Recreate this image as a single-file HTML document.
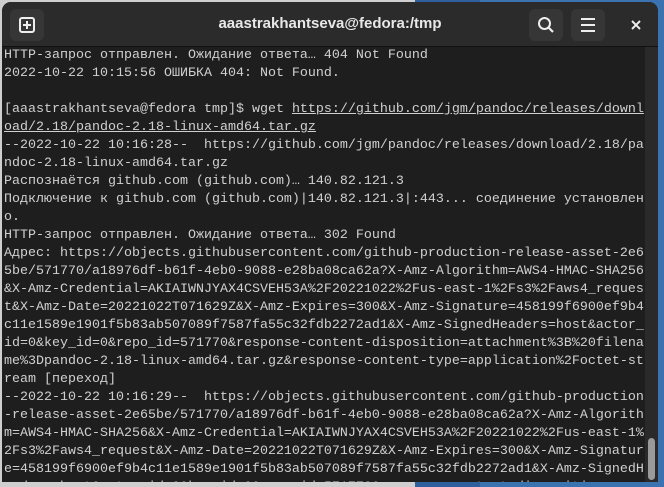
<!DOCTYPE html>
<html><head><meta charset="utf-8"><style>
html,body{margin:0;padding:0;width:664px;height:487px;overflow:hidden;background:#3a6fa8;}
.bgb{position:absolute;left:0;top:0;width:664px;height:487px;background:linear-gradient(90deg,#cfcfcf 0 415px,#2f5f9c 415px 480px,#3b73b0 480px);}
.win{position:absolute;left:2px;top:2px;width:656px;height:480px;background:#1e1e1e;border-radius:9px 9px 0 0;overflow:hidden;}
.hb{position:absolute;left:0;top:0;width:656px;height:44px;background:#2b2b2b;border-bottom:1px solid #111;z-index:2;}
.btn{position:absolute;top:7px;width:34px;height:32px;background:#363636;border-radius:6px;}
.title{position:absolute;left:0;width:656px;top:13px;text-align:center;color:#e8e8e8;font:bold 15px "Liberation Sans","DejaVu Sans",sans-serif;}
.term{position:absolute;left:2px;top:45px;width:640px;height:435px;overflow:hidden;font:13.33px "Liberation Mono","DejaVu Sans Mono",monospace;color:#d0d0d0;white-space:pre;}
.term div{height:18px;line-height:18px;overflow:hidden;}
.u{text-decoration:underline;}
.track{position:absolute;left:643px;top:45px;width:13px;height:435px;background:#2a2a2a;}
.thumb{position:absolute;left:646px;top:436px;width:7px;height:42px;background:#9a9a9a;border-radius:4px;}
</style></head><body>
<div class="bgb"></div>
<div class="win">
<div class="hb">
<div class="btn" style="left:8px"><svg width="34" height="32"><rect x="10" y="9" width="14" height="14" rx="2" fill="none" stroke="#eee" stroke-width="2"/><path d="M17 12v8M13 16h8" stroke="#eee" stroke-width="2"/></svg></div>
<div class="title">aaastrakhantseva@fedora:/tmp</div>
<div class="btn" style="left:527px"><svg width="34" height="32"><circle cx="15.5" cy="14.5" r="5.5" fill="none" stroke="#eee" stroke-width="2"/><path d="M19.5 18.5l4.5 4.5" stroke="#eee" stroke-width="2.2"/></svg></div>
<div class="btn" style="left:569px"><svg width="34" height="32"><path d="M10 10h14M10 16h14M10 22h14" stroke="#eee" stroke-width="2"/></svg></div>
<svg style="position:absolute;left:628px;top:17px" width="12" height="12"><path d="M2 2l8 8M10 2l-8 8" stroke="#eee" stroke-width="2"/></svg>
</div>
<div class="track"></div><div class="thumb"></div>
<div class="term"><div>HTTP-запрос отправлен. Ожидание ответа… 404 Not Found</div><div>2022-10-22 10:15:56 ОШИБКА 404: Not Found.</div><div> </div><div>[aaastrakhantseva@fedora tmp]$ wget <span class="u">https://github.com/jgm/pandoc/releases/downl</span></div><div><span class="u">oad/2.18/pandoc-2.18-linux-amd64.tar.gz</span></div><div>--2022-10-22 10:16:28--  https://github.com/jgm/pandoc/releases/download/2.18/pa</div><div>ndoc-2.18-linux-amd64.tar.gz</div><div>Распознаётся github.com (github.com)… 140.82.121.3</div><div>Подключение к github.com (github.com)|140.82.121.3|:443... соединение установлен</div><div>о.</div><div>HTTP-запрос отправлен. Ожидание ответа… 302 Found</div><div>Адрес: https://objects.githubusercontent.com/github-production-release-asset-2e6</div><div>5be/571770/a18976df-b61f-4eb0-9088-e28ba08ca62a?X-Amz-Algorithm=AWS4-HMAC-SHA256</div><div>&amp;X-Amz-Credential=AKIAIWNJYAX4CSVEH53A%2F20221022%2Fus-east-1%2Fs3%2Faws4_reques</div><div>t&amp;X-Amz-Date=20221022T071629Z&amp;X-Amz-Expires=300&amp;X-Amz-Signature=458199f6900ef9b4</div><div>c11e1589e1901f5b83ab507089f7587fa55c32fdb2272ad1&amp;X-Amz-SignedHeaders=host&amp;actor_</div><div>id=0&amp;key_id=0&amp;repo_id=571770&amp;response-content-disposition=attachment%3B%20filena</div><div>me%3Dpandoc-2.18-linux-amd64.tar.gz&amp;response-content-type=application%2Foctet-st</div><div>ream [переход]</div><div>--2022-10-22 10:16:29--  https://objects.githubusercontent.com/github-production</div><div>-release-asset-2e65be/571770/a18976df-b61f-4eb0-9088-e28ba08ca62a?X-Amz-Algorith</div><div>m=AWS4-HMAC-SHA256&amp;X-Amz-Credential=AKIAIWNJYAX4CSVEH53A%2F20221022%2Fus-east-1%</div><div>2Fs3%2Faws4_request&amp;X-Amz-Date=20221022T071629Z&amp;X-Amz-Expires=300&amp;X-Amz-Signatur</div><div>e=458199f6900ef9b4c11e1589e1901f5b83ab507089f7587fa55c32fdb2272ad1&amp;X-Amz-SignedH</div><div>eaders=host&amp;actor_id=0&amp;key_id=0&amp;repo_id=571770&amp;response-content-disposition</div></div>
</div>
</body></html>
